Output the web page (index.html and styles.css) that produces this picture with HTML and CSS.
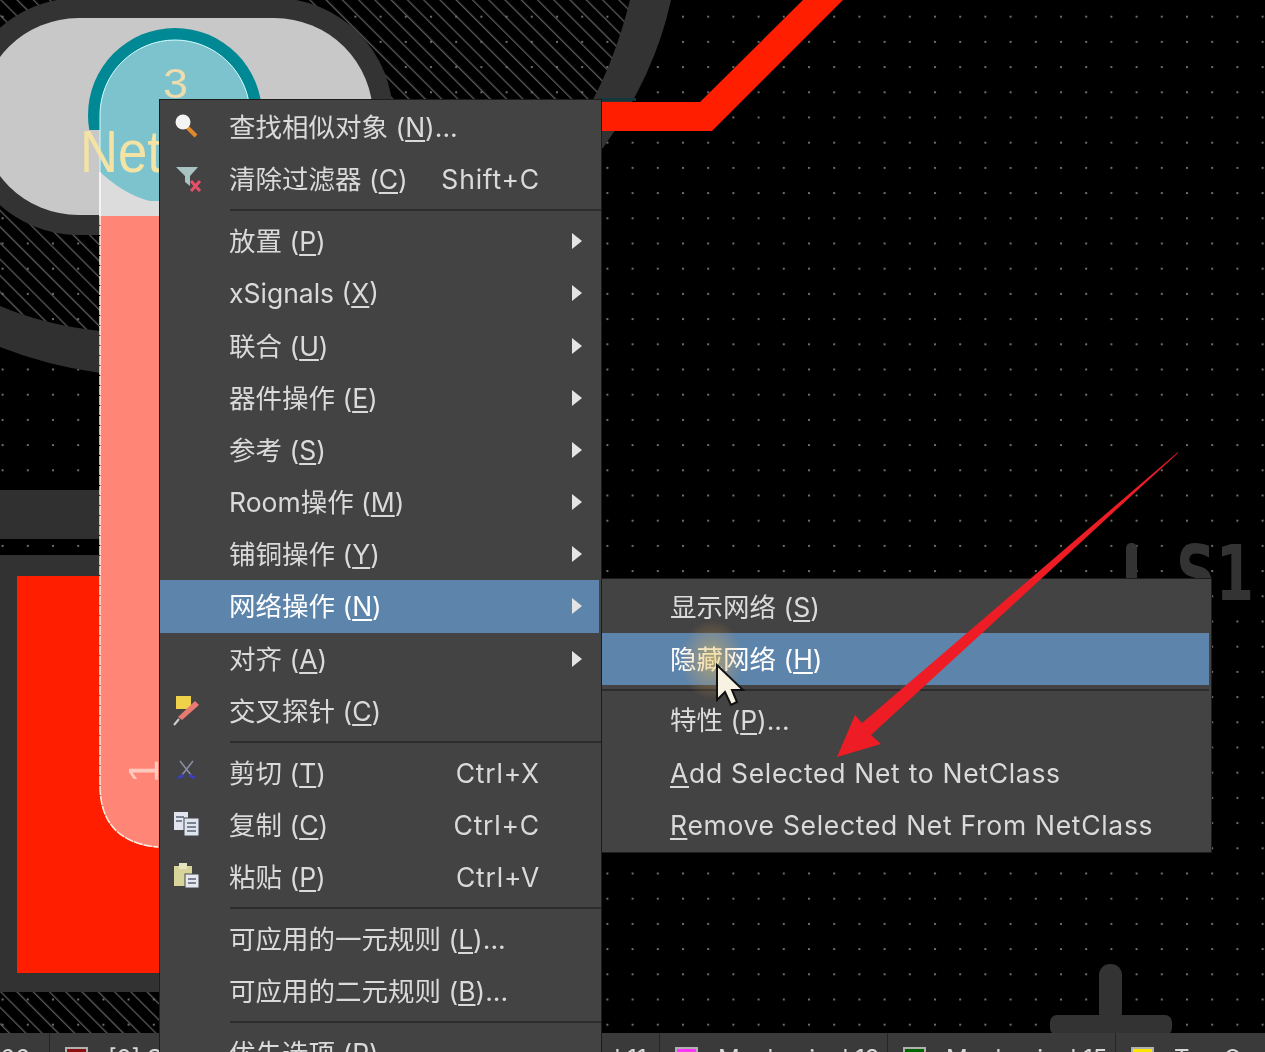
FILE: index.html
```html
<!DOCTYPE html>
<html lang="zh-CN">

<head>
    <meta charset="UTF-8">
    <title>PCB 右键菜单</title>
    <link rel="stylesheet" href="styles.css">
</head>

<body>
    <div class="stage">
        <!-- PCB canvas -->
        <svg class="board" width="1265" height="1052" viewBox="0 0 1265 1052">
            <defs>
                <pattern id="hatch" width="11.5" height="11.5" patternUnits="userSpaceOnUse" patternTransform="rotate(-45)">
                    <rect x="0" y="0" width="1.3" height="11.5" fill="#5a5a5a"></rect>
                </pattern>
                <pattern id="dots" x="1.6" y="-9.5" width="25.2" height="25.2" patternUnits="userSpaceOnUse">
                    <rect x="0" y="0" width="2" height="2" fill="#6e6e6e"></rect>
                </pattern>
                <clipPath id="ringClip">
                    <rect x="0" y="0" width="400" height="130"></rect>
                </clipPath>
            </defs>
            <rect width="1265" height="1052" fill="#000"></rect>
            <path d="M0,0 H632 Q618,60 590,110 H160 V332 H100 Q45,325 0,306 Z" fill="url(#hatch)"></path>
            <rect x="0" y="992" width="170" height="42" fill="url(#hatch)"></rect>
            <rect width="1265" height="1052" fill="url(#dots)"></rect>

            <!-- copper and silkscreen -->
            <path d="M630,0 H671 Q655,75 603,148 H590 V105 Q615,60 630,0 Z" fill="#333"></path>
            <path d="M0,306 Q45,325 100,331 V373 Q45,365 0,347 Z" fill="#303030"></path>
            <rect x="0" y="490" width="110" height="49" fill="#303030"></rect>
            <rect x="0" y="555" width="170" height="437" fill="#323232"></rect>
            <rect x="17" y="576" width="150" height="397" fill="#ff1e00"></rect>
            <polygon points="602,102 700,102 803,0 843,0 712,131 602,131" fill="#ff1e00"></polygon>
            <rect x="600" y="98" width="36" height="3" fill="#12383d"></rect>

            <rect x="-40" y="-2" width="433" height="237" rx="118.5" fill="#333"></rect>
            <rect x="-20" y="18" width="393" height="197" rx="98.5" fill="#c8c8c8"></rect>
            <circle cx="175" cy="115" r="87" fill="#008895" clip-path="url(#ringClip)"></circle>
            <rect x="100" y="165" width="60" height="51" fill="#dcdcdc"></rect>
            <path d="M100,115 A75,75 0 0 1 250,115 V160 L160,201 H150 Q125,195 100,172 Z" fill="#7cc3ce"></path>
            <path d="M100,172 V115 A75,75 0 0 1 250,115" fill="none" stroke="#d5ffff" stroke-width="1"></path>
            <line x1="100" y1="172" x2="100" y2="216" stroke="#f4f4f4" stroke-width="2"></line>
            <path d="M100,216 H170 V848 H158 Q100,842 100,785 Z" fill="#ff8577"></path>
            <path d="M100,216 V785 Q100,842 158,847" fill="none" stroke="#fff1e6" stroke-width="1.5" stroke-dasharray="9 1"></path>
            <text class="pad-num" x="163" y="98" textLength="25" lengthAdjust="spacingAndGlyphs">3</text>
            <text class="pad-net" x="80" y="172" textLength="82" lengthAdjust="spacingAndGlyphs">Net</text>
            <text class="pad-pin" transform="translate(158,783) rotate(-90)">1</text>

            <rect x="1126" y="543" width="11" height="40" rx="5" fill="#333"></rect>
            <text class="silk" x="1176" y="600" textLength="78" lengthAdjust="spacingAndGlyphs">S1</text>
            <rect x="1099" y="964" width="23" height="60" rx="11" fill="#333"></rect>
            <rect x="1050" y="1015" width="122" height="20" rx="7" fill="#333"></rect>
        </svg>

        <!-- layer tabs -->
        <div class="layer-bar">
            <div class="tab tab-first"><span class="tab-text">66</span></div>
            <div class="tab tab-second"><span class="swatch sw-red"></span><span class="tab-text">[2] Si</span></div>
            <div class="tab"></div>
            <div class="tab"><span class="swatch sw-gray"></span><span class="tab-text">Mechanical 11</span></div>
            <div class="tab"><span class="swatch sw-pink"></span><span class="tab-text">Mechanical 13</span></div>
            <div class="tab"><span class="swatch sw-green"></span><span class="tab-text">Mechanical 15</span></div>
            <div class="tab"><span class="swatch sw-yellow"></span><span class="tab-text">Top Overlay</span></div>
        </div>

        <!-- main menu -->
        <div class="menu main-menu">
            <div class="row">
                <span class="ico">
                    <svg width="30" height="30" viewBox="0 0 30 30">
                        <line x1="14" y1="15" x2="23" y2="24" stroke="#e08a2c" stroke-width="4"></line>
                        <circle cx="10" cy="10" r="7.5" fill="#f4f4f4"></circle>
                    </svg>
                </span>
                <span>查找相似对象 (<u>N</u>)...</span>
            </div>
            <div class="row">
                <span class="ico">
                    <svg width="30" height="30" viewBox="0 0 30 30">
                        <path d="M3,3 H25 L17,12 V22 L12,18 V12 Z" fill="#a9c2c2"></path>
                        <path d="M18,17 L27,27 M27,17 L18,27" stroke="#e8506a" stroke-width="3"></path>
                    </svg>
                </span>
                <span>清除过滤器 (<u>C</u>)</span>
                <span class="key">Shift+C</span>
            </div>
            <div class="sep"></div>
            <div class="row"><span class="ico"></span><span>放置 (<u>P</u>)</span><span class="arrow"></span></div>
            <div class="row"><span class="ico"></span><span>xSignals (<u>X</u>)</span><span class="arrow"></span></div>
            <div class="row"><span class="ico"></span><span>联合 (<u>U</u>)</span><span class="arrow"></span></div>
            <div class="row"><span class="ico"></span><span>器件操作 (<u>E</u>)</span><span class="arrow"></span></div>
            <div class="row"><span class="ico"></span><span>参考 (<u>S</u>)</span><span class="arrow"></span></div>
            <div class="row"><span class="ico"></span><span>Room操作 (<u>M</u>)</span><span class="arrow"></span></div>
            <div class="row"><span class="ico"></span><span>铺铜操作 (<u>Y</u>)</span><span class="arrow"></span></div>
            <div class="row active"><span class="ico"></span><span>网络操作 (<u>N</u>)</span><span class="arrow"></span></div>
            <div class="row"><span class="ico"></span><span>对齐 (<u>A</u>)</span><span class="arrow"></span></div>
            <div class="row">
                <span class="ico">
                    <svg width="30" height="32" viewBox="0 0 30 32">
                        <rect x="3" y="1" width="15" height="13" fill="#efd24a"></rect>
                        <path d="M22,6 L26,10 L9,25 L5,22 Z" fill="#e87a72"></path>
                        <line x1="6" y1="24" x2="1" y2="30" stroke="#cfcfcf" stroke-width="2"></line>
                    </svg>
                </span>
                <span>交叉探针 (<u>C</u>)</span>
            </div>
            <div class="sep"></div>
            <div class="row">
                <span class="ico">
                    <svg width="30" height="30" viewBox="0 0 30 30">
                        <path d="M7,3 L18,17 M20,3 L9,17" stroke="#8a8fa8" stroke-width="1.5" fill="none"></path>
                        <path d="M5,20 L11,17 M22,20 L16,17" stroke="#3a3fc0" stroke-width="3" fill="none"></path>
                    </svg>
                </span>
                <span>剪切 (<u>T</u>)</span>
                <span class="key">Ctrl+X</span>
            </div>
            <div class="row">
                <span class="ico">
                    <svg width="30" height="30" viewBox="0 0 30 30">
                        <rect x="1" y="2" width="14" height="18" fill="#dfe4ee"></rect>
                        <rect x="11" y="8" width="15" height="18" fill="#dfe4ee" stroke="#43464c"></rect>
                        <path d="M3,7 H11 M3,11 H9 M14,13 H23 M14,17 H23 M14,21 H23" stroke="#5a6070" stroke-width="1.5"></path>
                    </svg>
                </span>
                <span>复制 (<u>C</u>)</span>
                <span class="key">Ctrl+C</span>
            </div>
            <div class="row">
                <span class="ico">
                    <svg width="30" height="30" viewBox="0 0 30 30">
                        <rect x="1" y="4" width="18" height="20" fill="#d8d49a"></rect>
                        <rect x="6" y="1" width="8" height="6" fill="#e8e4c0"></rect>
                        <rect x="12" y="12" width="14" height="14" fill="#e6e8ee" stroke="#43464c"></rect>
                        <path d="M15,17 H23 M15,21 H23" stroke="#5a6070" stroke-width="1.5"></path>
                    </svg>
                </span>
                <span>粘贴 (<u>P</u>)</span>
                <span class="key">Ctrl+V</span>
            </div>
            <div class="sep"></div>
            <div class="row"><span class="ico"></span><span>可应用的一元规则 (<u>L</u>)...</span></div>
            <div class="row"><span class="ico"></span><span>可应用的二元规则 (<u>B</u>)...</span></div>
            <div class="sep"></div>
            <div class="row"><span class="ico"></span><span>优先选项 (<u>P</u>)...</span></div>
        </div>

        <!-- sub menu -->
        <div class="menu sub-menu">
            <div class="row"><span>显示网络 (<u>S</u>)</span></div>
            <div class="row active"><span>隐藏网络 (<u>H</u>)</span></div>
            <div class="sep"></div>
            <div class="row"><span>特性 (<u>P</u>)...</span></div>
            <div class="row wide"><span><u>A</u>dd Selected Net to NetClass</span></div>
            <div class="row wide"><span><u>R</u>emove Selected Net From NetClass</span></div>
        </div>

        <!-- cursor and arrow drawn over the menus -->
        <svg class="overlay" width="1265" height="1052" viewBox="0 0 1265 1052">
            <defs>
                <radialGradient id="glow">
                    <stop offset="0" stop-color="#e8c04a" stop-opacity="0.55"></stop>
                    <stop offset="1" stop-color="#e8a04a" stop-opacity="0"></stop>
                </radialGradient>
            </defs>
            <ellipse cx="712" cy="660" rx="32" ry="40" fill="url(#glow)"></ellipse>
            <path d="M717,665 V700 L725,692 L731,705 L737,702 L732,690 L743,690 Z" fill="#f7f2e2" stroke="#111" stroke-width="2"></path>
            <polygon points="1178,452 1178,453 871,735 881,744 837,757 855,715 862,723" fill="#ee1c25"></polygon>
        </svg>
    </div>
</body>

</html>
```

FILE: styles.css
```css
/* page */
html,
body {
    margin: 0;
    height: 100%;
    overflow: hidden;
    background-color: #000;
}

.stage {
    position: relative;
    width: 1265px;
    height: 1052px;
    overflow: hidden;
    font-family: "Inter", "Noto Sans CJK SC", sans-serif;
    filter: blur(0.5px);
}

.board,
.overlay {
    position: absolute;
    left: 0;
    top: 0;
}

.overlay {
    pointer-events: none;
}

/* text on the board */
.pad-num,
.pad-net,
.pad-pin {
    font-family: "Liberation Sans", sans-serif;
}

.pad-num {
    font-size: 42px;
    fill: #ecdcae;
}

.pad-net {
    font-size: 60px;
    fill: #f3e3a4;
}

.pad-pin {
    font-size: 42px;
    fill: #ffc9bd;
}

.silk {
    font-family: "DejaVu Sans", sans-serif;
    font-weight: bold;
    font-size: 76px;
    fill: #333;
}

/* layer tabs */
.layer-bar {
    position: absolute;
    left: 0;
    top: 1033px;
    width: 1265px;
    height: 19px;
    display: flex;
    overflow: hidden;
    background-color: #3a3a3a;
}

.tab {
    flex: none;
    width: 228px;
    height: 40px;
    box-sizing: border-box;
    display: flex;
    gap: 20px;
    padding: 14px 0 0 15px;
    border-left: 1px solid #262626;
    color: #d8d8d8;
    font-size: 24px;
    line-height: 1;
}

.tab-first {
    width: 49px;
    padding-left: 0;
    border-left: 0;
}

.tab-second {
    width: 154px;
}

.swatch {
    flex: none;
    width: 19px;
    height: 19px;
    border: 2px solid #b0b0b0;
}

.sw-red {
    background-color: #8b1010;
}

.sw-gray {
    background-color: #808080;
}

.sw-pink {
    background-color: #ff33ff;
}

.sw-green {
    background-color: #006400;
}

.sw-yellow {
    background-color: #ffe600;
}

.tab-text {
    white-space: nowrap;
}

/* menus */
.menu {
    position: absolute;
    box-sizing: border-box;
    background-color: #434343;
    border: 1px solid #1c1c1c;
    color: #dadada;
    font-size: 26.5px;
    line-height: 32px;
}

.main-menu {
    left: 159px;
    top: 99px;
    width: 443px;
    height: 980px;
    padding-top: 1px;
}

.sub-menu {
    left: 601px;
    top: 578px;
    width: 611px;
    height: 275px;
    padding: 2px 2px 0 0;
}

.row {
    display: flex;
    align-items: center;
    height: 52.2px;
    padding-right: 19px;
    white-space: nowrap;
}

.sub-menu .row {
    padding-left: 68px;
}

.row.wide {
    letter-spacing: 0.7px;
}

.row.active {
    background-color: #5d84ab;
    color: #fff;
}

.main-menu .row.active {
    margin-right: 2px;
    padding-right: 17px;
}

.row u {
    text-underline-offset: 3px;
    text-decoration-thickness: 1.5px;
}

.ico {
    flex: none;
    width: 69px;
    padding-left: 13px;
    box-sizing: border-box;
    display: flex;
    align-items: center;
}

.key {
    margin-left: auto;
    margin-right: 42px;
    letter-spacing: 0.8px;
}

.arrow {
    margin-left: auto;
    width: 0;
    height: 0;
    border-left: 10px solid #e4e4e4;
    border-top: 8px solid transparent;
    border-bottom: 8px solid transparent;
}

.sep {
    height: 9.7px;
    position: relative;
}

.sep::after {
    content: "";
    position: absolute;
    left: 70px;
    right: 0;
    top: 4px;
    height: 2px;
    background-color: #2c2c2c;
}

.sub-menu .sep {
    height: 9px;
}

.sub-menu .sep::after {
    left: 0;
    right: 0;
}
```
